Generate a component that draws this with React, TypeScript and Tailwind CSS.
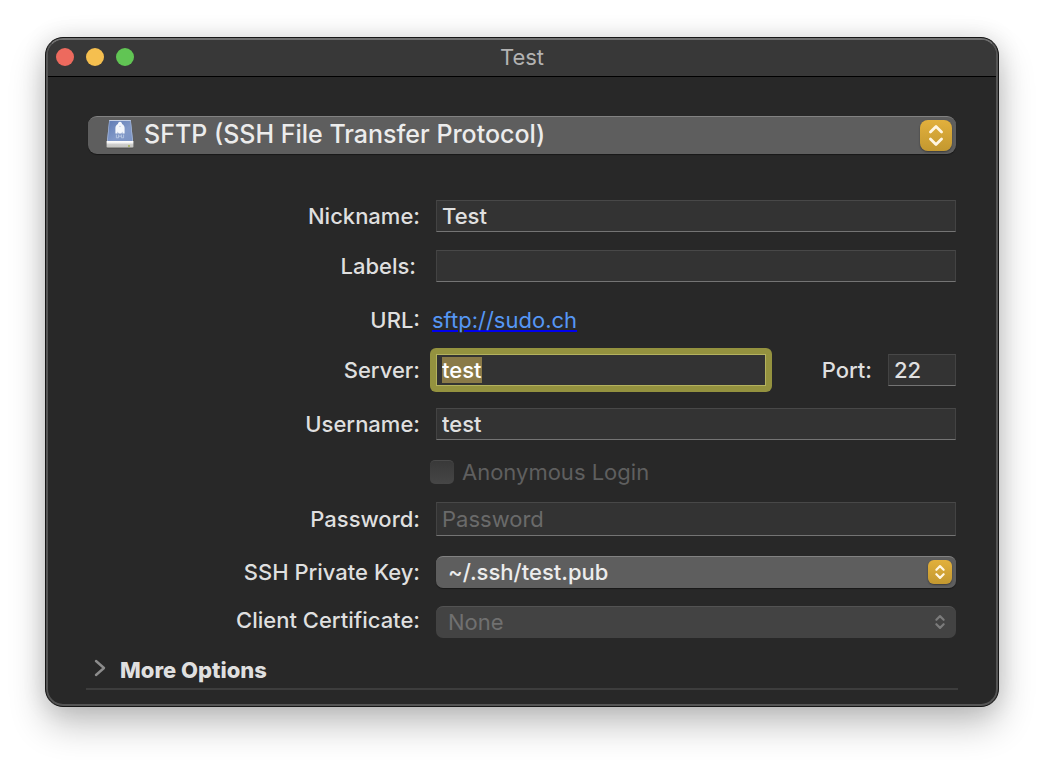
import { useEffect, useRef } from "react";
import type { ReactNode } from "react";

const fieldClass =
  "block w-full min-w-0 rounded-none border border-x-[#434343] border-t-[#484848] border-b-[#747474] bg-[#333333] px-[5px] text-[22px] leading-[28px] font-medium text-[#e0e0e0] outline-none placeholder:font-normal placeholder:text-[#6a6a6a]";

function Updown({ className }: { className: string }) {
  return (
    <svg viewBox="0 0 16 24" fill="none" stroke="currentColor" strokeLinecap="round" strokeLinejoin="round" className={className} aria-hidden="true">
      <path d="M2.2 8.4 8 2.6l5.8 5.8M2.2 15.6 8 21.4l5.8-5.8" />
    </svg>
  );
}

function DriveIcon() {
  return (
    <svg viewBox="0 0 28 30" className="h-[30px] w-7" aria-hidden="true">
      <defs>
        <linearGradient id="driveTop" x1="0" y1="0" x2="1" y2="1">
          <stop offset="0" stopColor="#5d7ab4" />
          <stop offset="0.6" stopColor="#8299c8" />
          <stop offset="1" stopColor="#7b94c4" />
        </linearGradient>
        <linearGradient id="driveFront" x1="0" y1="0" x2="0" y2="1">
          <stop offset="0" stopColor="#ffffff" />
          <stop offset="0.3" stopColor="#f1f1f1" />
          <stop offset="0.45" stopColor="#cfcfcf" />
          <stop offset="1" stopColor="#c0c0bc" />
        </linearGradient>
      </defs>
      <path d="M3.2 1h21.6L27 22H1z" fill="url(#driveTop)" />
      <path d="M3.2 1h21.6v.9H3.1z" fill="#c5d0e4" />
      <path d="M3.2 1 1 22h.8L3.7 1zM24.8 1 27 22h-.8L24.3 1z" fill="#a9bad8" />
      <path d="M.6 22h26.800v5.600q0 1.200-1.200 1.200H1.800q-1.200 0-1.200-1.200z" fill="url(#driveFront)" />
      <path d="M1 29h26" stroke="#333" strokeOpacity=".5" strokeWidth=".8" />
      <circle cx="23" cy="27" r=".9" fill="#9dab47" />
      <path
        d="M14 2.800c1.500 0 1.900 1.100 2.100 2.300 1.700 1 2.500 2.400 2.500 4v5.500h-2.200v-2.200l-1 2.200h-2.800l-1-2.200v2.200H9.400V9.100c0-1.600.8-3 2.500-4 .2-1.200.6-2.300 2.100-2.300z"
        fill="#f4f7fc"
      />
      <path d="M13.200 7.400h1.600" stroke="#a9bcdc" strokeWidth=".7" />
      <path d="M10.400 15.600v3.200h2.200v-3.200M15.400 15.600v3.200h2.200v-3.200M12.600 17.200h2.800" fill="none" stroke="#c2d0e8" strokeWidth=".8" />
    </svg>
  );
}

function Row({ label, id, className, labelClass = "", children }: { label: string; id: string; className: string; labelClass?: string; children: ReactNode }) {
  return (
    <div className={`grid grid-cols-[332px_minmax(0,1fr)] items-center gap-4 ${className}`}>
      <label htmlFor={id} className={`text-right font-medium whitespace-nowrap ${labelClass}`}>
        {label}
      </label>
      {children}
    </div>
  );
}

export default function App() {
  const server = useRef<HTMLInputElement>(null);
  useEffect(() => {
    server.current?.focus();
    server.current?.select();
  }, []);

  return (
    <div className="min-h-screen bg-white px-[45px] pt-[37px] pb-[53px] font-[Inter,'Liberation_Sans',sans-serif] text-[22px] leading-[28px] text-[#dfdfdf]">
      <main className="overflow-hidden rounded-[18px] border border-[#161616] bg-[#282828] shadow-[0_18px_36px_rgba(0,0,0,0.24),0_0_24px_rgba(0,0,0,0.12)]">
        <div className="rounded-[17px] border-2 border-[#555555] border-t-[#707070]">
          <header className="grid h-[37px] grid-cols-[1fr_auto_1fr] items-center rounded-t-[15px] border-b border-black bg-[#383838] px-2 pb-[2px]">
            <div className="flex gap-3">
              <button type="button" aria-label="Close" className="size-[18px] rounded-full bg-[#ed6a5e]" />
              <button type="button" aria-label="Minimize" className="size-[18px] rounded-full bg-[#f5bf4f]" />
              <button type="button" aria-label="Zoom" className="size-[18px] rounded-full bg-[#61c554]" />
            </div>
            <h1 className="text-[#b2b2b2]">Test</h1>
          </header>

          <form className="px-10 pt-[39px] pb-[14px]" onSubmit={(e) => e.preventDefault()}>
            <div className="relative">
              <select
                aria-label="Protocol"
                className="block h-[38px] w-full appearance-none rounded-[9px] border-t border-[#828282] bg-[#5e5e5e] pr-12 pb-[4px] pl-14 text-[25px] font-medium text-[#ececec] shadow-[0_1px_1px_rgba(0,0,0,0.4)] outline-none"
              >
                <option>SFTP (SSH File Transfer Protocol)</option>
              </select>
              <span className="pointer-events-none absolute top-[3px] left-[18px]">
                <DriveIcon />
              </span>
              <span className="pointer-events-none absolute top-1 right-1 flex h-[31px] w-8 items-center justify-center rounded-[8px] bg-linear-to-b from-[#e2b03c] to-[#c39830] text-[#fff6e2] shadow-[0_1px_2px_rgba(0,0,0,0.4)]">
                <Updown className="h-[23px] w-4 stroke-[2.900]" />
              </span>
            </div>

            <Row label="Nickname:" id="nickname" className="mt-[46px] h-8">
              <input id="nickname" defaultValue="Test" className={`${fieldClass} h-8`} />
            </Row>
            <Row label="Labels:" id="labels" className="mt-[18px] h-8" labelClass="pr-1">
              <input id="labels" className={`${fieldClass} h-8`} />
            </Row>
            <div className="mt-6 grid h-7 grid-cols-[332px_minmax(0,1fr)] items-center gap-3">
              <span className="text-right font-medium">URL:</span>
              <a href="sftp://sudo.ch" className="justify-self-start text-[#5697f5] underline decoration-[#0000ee] decoration-2 underline-offset-2">
                sftp://sudo.ch
              </a>
            </div>
            <Row label="Server:" id="server" className="mt-5 h-8">
              <div className="flex items-center">
                <div className="-m-[6px] min-w-0 flex-1 rounded-[6px] bg-[#94923f] p-[6px]">
                  <input
                    id="server"
                    ref={server}
                    defaultValue="test"
                    className={`${fieldClass} h-8 selection:bg-[#8b7a48fe] selection:text-white focus:border-[#b4b25e]`}
                  />
                </div>
                <label htmlFor="port" className="mr-4 ml-14 font-medium">
                  Port:
                </label>
                <div className="w-[68px]">
                  <input id="port" defaultValue="22" className={`${fieldClass} h-8`} />
                </div>
              </div>
            </Row>
            <Row label="Username:" id="username" className="mt-[22px] h-8">
              <input id="username" defaultValue="test" className={`${fieldClass} h-8`} />
            </Row>
            <div className="mt-5 flex h-6 items-center gap-2 pl-[342px] text-[#5f5f5f]">
              <input
                id="anonymous"
                type="checkbox"
                disabled
                className="size-6 appearance-none rounded-[5px] border-t border-[#4a4a4a] bg-linear-to-b from-[#393939] to-[#464646]"
              />
              <label htmlFor="anonymous">Anonymous Login</label>
            </div>
            <Row label="Password:" id="password" className="mt-[18px] h-[34px]">
              <input id="password" type="password" placeholder="Password" className={`${fieldClass} h-[34px]`} />
            </Row>
            <Row label="SSH Private Key:" id="key" className="mt-5 h-8">
              <div className="relative">
                <select
                  id="key"
                  className="block h-8 w-full appearance-none rounded-[7px] border-t border-[#828282] bg-[#5e5e5e] pr-9 pb-px pl-3 text-[22px] font-medium text-[#ececec] shadow-[0_1px_1px_rgba(0,0,0,0.4)] outline-none"
                >
                  <option>~/.ssh/test.pub</option>
                </select>
                <span className="pointer-events-none absolute top-1 right-1 flex size-6 items-center justify-center rounded-[6px] bg-linear-to-b from-[#e2b03c] to-[#c39830] text-[#fff6e2] shadow-[0_1px_2px_rgba(0,0,0,0.4)]">
                  <Updown className="h-4 w-[10px] stroke-[3.400]" />
                </span>
              </div>
            </Row>
            <Row label="Client Certificate:" id="certificate" className="mt-[18px] h-8" labelClass="pb-1">
              <div className="relative">
                <select
                  id="certificate"
                  disabled
                  className="block h-8 w-full appearance-none rounded-[7px] border-t border-[#535353] bg-[#434343] pr-9 pb-px pl-3 text-[22px] text-[#707070] opacity-100 outline-none"
                >
                  <option>None</option>
                </select>
                <span className="pointer-events-none absolute top-1 right-1 flex size-6 items-center justify-center text-[#7b7b7b]">
                  <Updown className="h-4 w-[10px] stroke-[3.400]" />
                </span>
              </div>
            </Row>
            <div className="-mx-[2px] mt-[18px] border-b-2 border-[#3d3d3d] pb-1">
              <button type="button" aria-expanded="false" className="flex h-7 items-center gap-[14px] pl-2 font-extrabold">
                <svg viewBox="0 0 12 18" fill="none" stroke="#8c8c8c" strokeWidth="2.4" strokeLinecap="round" strokeLinejoin="round" className="-mt-1 h-[18px] w-3" aria-hidden="true">
                  <path d="m2 2 8 7-8 7" />
                </svg>
                More Options
              </button>
            </div>
          </form>
        </div>
      </main>
    </div>
  );
}
